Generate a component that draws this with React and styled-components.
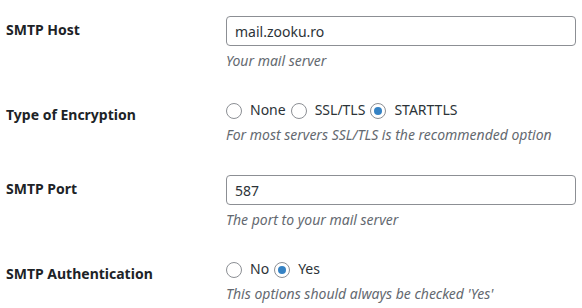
import React from 'react';
import styled, { createGlobalStyle } from 'styled-components';

const GlobalStyle = createGlobalStyle`
  html, body {
    margin: 0;
    padding: 0;
    background: #fff;
  }
  body {
    font-family: "Noto Sans", "Open Sans", sans-serif;
    font-size: 14px;
    color: #3c434a;
  }
`;

const Table = styled.div`
  display: flex;
  flex-direction: column;
  padding: 1px 0 0 6px;
`;

const Row = styled.div`
  display: flex;
  align-items: flex-start;
`;

const Label = styled.div`
  width: 210px;
  padding: 20px 10px 20px 0;
  box-sizing: border-box;
  font-weight: 700;
  line-height: 1.3;
  color: #1d2327;
`;

const Field = styled.div`
  flex: 1;
  padding: 15px 6px 15px 10px;
  line-height: 1.3;
`;

const TextInput = styled.input`
  display: block;
  width: 100%;
  box-sizing: border-box;
  height: 30px;
  margin: 0;
  padding: 0 8px;
  border: 1px solid #8c8f94;
  border-radius: 4px;
  font: inherit;
  font-size: 14px;
  color: #2c3338;
  background: #fff;
  outline: none;
`;

const Options = styled.div`
  height: 19px;
  display: flex;
  align-items: center;
`;

const Choice = styled.label`
  display: inline-flex;
  align-items: center;
  margin-right: 5px;
  color: #2c3338;
`;

const Radio = styled.span`
  width: 16px;
  height: 16px;
  box-sizing: border-box;
  border: 1px solid #8c8f94;
  border-radius: 50%;
  margin-right: 8px;
  display: inline-flex;
  align-items: center;
  justify-content: center;
  background: #fff;

  &::after {
    content: '';
    display: ${p => (p.$checked ? 'block' : 'none')};
    width: 8px;
    height: 8px;
    border-radius: 50%;
    background: #3582c4;
  }
`;

const Description = styled.p`
  margin: 4px 0 0;
  font-style: italic;
  line-height: 1.5;
  color: #646970;
`;

const RadioGroup = ({ options, value }) => (
  <Options>
    {options.map(o => (
      <Choice key={o}>
        <Radio $checked={o === value} />
        {o}
      </Choice>
    ))}
  </Options>
);

export default function App() {
  return (
    <>
      <GlobalStyle />
      <Table>
        <Row>
          <Label>SMTP Host</Label>
          <Field>
            <TextInput defaultValue="mail.zooku.ro" />
            <Description>Your mail server</Description>
          </Field>
        </Row>
        <Row>
          <Label>Type of Encryption</Label>
          <Field>
            <RadioGroup options={['None', 'SSL/TLS', 'STARTTLS']} value="STARTTLS" />
            <Description>For most servers SSL/TLS is the recommended option</Description>
          </Field>
        </Row>
        <Row>
          <Label>SMTP Port</Label>
          <Field>
            <TextInput defaultValue="587" />
            <Description>The port to your mail server</Description>
          </Field>
        </Row>
        <Row>
          <Label>SMTP Authentication</Label>
          <Field>
            <RadioGroup options={['No', 'Yes']} value="Yes" />
            <Description>This options should always be checked 'Yes'</Description>
          </Field>
        </Row>
      </Table>
    </>
  );
}
